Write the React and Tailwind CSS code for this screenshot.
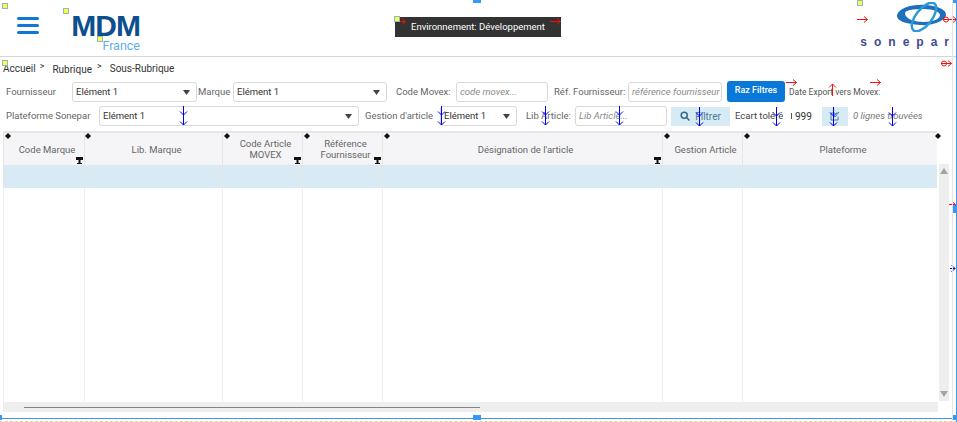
const font = { fontFamily: 'Roboto, sans-serif' };

const columns = [
  { label: 'Code Marque', width: 'w-[81px]', filter: true },
  { label: 'Lib. Marque', width: 'w-[138px]' },
  { label: 'Code Article MOVEX', width: 'w-[80px]', filter: true },
  { label: 'Référence Fournisseur', width: 'w-[80px]', filter: true },
  { label: "Désignation de l'article", width: 'w-[280px]', filter: true },
  { label: 'Gestion Article', width: 'w-[80px]' },
  { label: 'Plateforme', width: 'flex-1' },
];

const blueArrows = [
  { x: 178, y: 106 }, { x: 436, y: 106 }, { x: 540, y: 106 }, { x: 614, y: 106 },
  { x: 694, y: 107 }, { x: 771, y: 107 }, { x: 828, y: 107 }, { x: 887, y: 107 },
];

const redArrows = [
  { x: 400, y: 18, w: 6 }, { x: 550, y: 18, w: 11 }, { x: 857, y: 16, w: 11 },
  { x: 943, y: 16, w: 14, ring: true }, { x: 786, y: 79, w: 11 }, { x: 870, y: 79, w: 11 },
  { x: 949, y: 201, w: 7 }, { x: 941, y: 60, w: 11, ring: true },
];

const yellowMarks = [
  { x: 2, y: 3 }, { x: 63, y: 8 }, { x: 97, y: 36 }, { x: 2, y: 60 }, { x: 394, y: 16 }, { x: 857, y: 0 },
];

const handles = [
  { x: 473, y: 0, w: 8, h: 3 }, { x: 952, y: 0, w: 5, h: 3 }, { x: 952, y: 205, w: 5, h: 8 },
  { x: 0, y: 415, w: 2, h: 5 }, { x: 473, y: 415, w: 8, h: 5 }, { x: 952, y: 415, w: 5, h: 5 },
];

const grips = [5, 85, 224, 304, 384, 664, 744, 935];

function Caret() {
  return (
    <svg width="7" height="5" viewBox="0 0 7 5" className="shrink-0">
      <path d="M0 0h7L3.500 5z" fill="#444" />
    </svg>
  );
}

function Select({ className, value = 'Elément 1' }) {
  return (
    <div className={`flex h-[20px] items-center justify-between rounded-[3px] border border-[#d8d8d8] bg-white pl-[3px] pr-[6px] text-[9.500px] text-[#333] ${className}`}>
      <span>{value}</span>
      <Caret />
    </div>
  );
}

function Field({ className, placeholder }) {
  return (
    <div className={`flex h-[20px] items-center overflow-hidden whitespace-nowrap rounded-[3px] border border-[#d8d8d8] bg-white px-[3px] text-[9.500px] italic text-[#8a8a8a] ${className}`}>
      {placeholder}
    </div>
  );
}

function Label({ children, className = '' }) {
  return <span className={`whitespace-nowrap text-[9.500px] text-[#666] ${className}`}>{children}</span>;
}

function FilterIcon() {
  return (
    <svg width="7" height="7" viewBox="0 0 7 7" className="absolute bottom-[1px] right-[1px]">
      <path d="M0 0h7v3H4.500v3H6v1H1V6h1.500V3H0z" fill="#111" />
    </svg>
  );
}

function Logo() {
  return (
    <svg width="52" height="30" viewBox="0 0 52 30">
      <path
        fillRule="evenodd"
        d="M1 13C3 6 16 2 30 3c12 1 21 5 20 10-1 6-13 11-26 10C10 22 0 19 1 13zM9 12c1 5 9 8 19 8 9 0 16-3 16-7 0-3-7-6-16-6C17 7 8 8 9 12z"
        fill="#1f6fbd"
      />
      <ellipse cx="28" cy="15" rx="17" ry="8" fill="none" stroke="#2a9ad8" strokeWidth="2.500" transform="rotate(-52 28 15)" />
    </svg>
  );
}

function Overlays() {
  return (
    <>
      {yellowMarks.map((m) => (
        <div key={`${m.x}-${m.y}`} className="absolute h-[6px] w-[6px] border border-[#8db4d8] bg-[#ffff33]" style={{ left: m.x, top: m.y }} />
      ))}
      {blueArrows.map((a) => (
        <svg key={a.x} width="10" height="20" viewBox="0 0 10 20" className="absolute" style={{ left: a.x, top: a.y }}>
          <path d="M5.500 0v19M2 5.500 5.500 9 9 5.500M2 15.500 5.500 19 9 15.500" fill="none" stroke="#0000f0" strokeWidth="1" />
        </svg>
      ))}
      {redArrows.map((a) => (
        <svg key={`${a.x}-${a.y}`} width={a.w} height="7" viewBox={`0 0 ${a.w} 7`} className="absolute" style={{ left: a.x, top: a.y }}>
          <path d={`M0 3.500h${a.w - 0.5}M${a.w - 4} .5l3.500 3-3.500 3`} fill="none" stroke="#ee1111" strokeWidth="1" />
          {a.ring && <circle cx="3" cy="3.500" r="2.500" fill="none" stroke="#ee1111" strokeWidth="1" />}
        </svg>
      ))}
      <svg width="9" height="13" viewBox="0 0 9 13" className="absolute left-[828px] top-[83px]">
        <path d="M4.500 13V1M1 4.500 4.500 1 8 4.500" fill="none" stroke="#ee1111" strokeWidth="1" />
      </svg>
      <svg width="6" height="9" viewBox="0 0 6 9" className="absolute left-[950px] top-[264px]">
        <path d="M0 4.500h5M1.500 1 5 4.500 1.500 8" fill="none" stroke="#0000f0" strokeWidth="1" />
      </svg>
      {grips.map((x) => (
        <svg key={x} width="6" height="6" viewBox="0 0 6 6" className="absolute top-[133px]" style={{ left: x }}>
          <path d="M3 0 6 3 3 6 0 3z" fill="#111" />
        </svg>
      ))}
      {handles.map((h) => (
        <div key={`${h.x}-${h.y}`} className="absolute bg-[#3399ff]" style={{ left: h.x, top: h.y, width: h.w, height: h.h }} />
      ))}
      <div className="absolute bottom-[3px] left-0 h-px w-full bg-[#3f97ea]" />
      <div className="absolute bottom-0 left-0 h-px w-full border-b border-dashed border-[#f0c8a0]" />
      <div className="absolute right-0 top-0 h-full w-px bg-[#3f97ea]" />
      <div className="absolute right-[4px] top-0 h-full w-px bg-[#e4e4e4]" />
    </>
  );
}

export default function App() {
  return (
    <div className="relative h-[422px] w-[957px] overflow-hidden bg-white" style={font}>
      <header className="flex h-[57px] items-start border-b border-[#d4d4d4]">
        <div className="ml-[17px] mt-[17px] flex h-[17px] w-[22px] flex-col justify-between">
          <div className="h-[3px] rounded-full bg-[#0d78d6]" />
          <div className="h-[3px] rounded-full bg-[#0d78d6]" />
          <div className="h-[3px] rounded-full bg-[#0d78d6]" />
        </div>
        <div className="ml-[30px] mt-[12px] flex w-[71px] flex-col items-end">
          <span className="text-[30px] font-bold leading-[28px] tracking-[-1px] text-[#0c4f8c]" style={{ fontFamily: '"Liberation Sans", sans-serif' }}>MDM</span>
          <span className="text-[12.500px] leading-[11px] text-[#62ade6]">France</span>
        </div>
        <div className="ml-[255px] mt-[17px] flex h-[20px] w-[166px] items-center justify-center bg-[#333] text-[9.500px] text-white">
          Environnement: Développement
        </div>
        <div className="ml-[301px] mt-[2px] flex w-[87px] flex-col items-end">
          <div className="mr-[1px]"><Logo /></div>
          <span className="mr-[-7px] mt-[4px] text-[12px] font-bold leading-[12px] tracking-[7px] text-[#3d4a96]" style={{ fontFamily: '"Liberation Sans", sans-serif' }}>sonepar</span>
        </div>
      </header>

      <nav className="ml-[3px] mt-[3px] flex h-[16px] items-center text-[10px] text-[#333]">
        <span>Accueil</span>
        <span className="mb-[2px] ml-[4px] text-[9px]">&gt;</span>
        <span className="ml-[8px] mt-[2px]">Rubrique</span>
        <span className="mb-[2px] ml-[5px] text-[9px]">&gt;</span>
        <span className="ml-[8px]">Sous-Rubrique</span>
      </nav>

      <div className="mt-[6px] flex h-[20px] items-center pl-[6px]">
        <Label className="w-[66px]">Fournisseur</Label>
        <Select className="w-[125px]" />
        <Label className="ml-[1px] w-[35px]">Marque</Label>
        <Select className="w-[154px]" />
        <Label className="ml-[9px] w-[60px]">Code Movex:</Label>
        <Field className="w-[92px]" placeholder="code movex..." />
        <Label className="ml-[6px] w-[74px]">Réf. Fournisseur:</Label>
        <Field className="w-[94px]" placeholder="référence fournisseur" />
        <button className="ml-[5px] h-[21px] w-[58px] -translate-y-px rounded-[3px] bg-[#0a78d8] text-[9px] font-medium text-white">Raz Filtres</button>
        <span className="ml-[4px] whitespace-nowrap text-[8.500px] text-[#555]">Date Export vers Movex:</span>
      </div>

      <div className="mt-[4px] flex h-[20px] items-center pl-[6px]">
        <Label className="w-[93px]">Plateforme Sonepar</Label>
        <Select className="w-[260px]" />
        <Label className="ml-[6px] w-[75px]">Gestion d'article</Label>
        <Select className="w-[77px]" />
        <Label className="ml-[9px] w-[49px]">Lib Article:</Label>
        <Field className="w-[92px]" placeholder="Lib Article..." />
        <button className="ml-[4px] flex h-[19px] w-[59px] items-center justify-center gap-[5px] bg-[#d7ebf5] text-[10px] text-[#4a7a95]">
          <svg width="10" height="10" viewBox="0 0 10 10">
            <circle cx="4.200" cy="4.200" r="3" fill="none" stroke="#2f6a8c" strokeWidth="1.500" />
            <path d="M6.500 6.500 9.500 9.500" stroke="#2f6a8c" strokeWidth="1.500" />
          </svg>
          Filtrer
        </button>
        <span className="ml-[5px] w-[56px] whitespace-nowrap text-[9.500px] text-[#444]">Ecart toléré</span>
        <div className="h-[6px] w-px bg-[#555]" />
        <span className="ml-[3px] w-[27px] text-[10px] text-[#333]">999</span>
        <button className="flex h-[19px] w-[26px] items-center justify-center bg-[#d7ebf5]">
          <svg width="10" height="10" viewBox="0 0 10 10">
            <path d="M8 5.500V9H1V2h4M3.500 4.500 5 6l4-5" fill="none" stroke="#4a7a95" strokeWidth="1" />
          </svg>
        </button>
        <span className="ml-[5px] whitespace-nowrap text-[9.500px] italic text-[#777]">0 lignes trouvées</span>
      </div>

      <div className="ml-[3px] mt-[5px] w-[946px]">
        <div className="w-[934px] border-t-2 border-[#e6e6e6]">
          <div className="flex h-[32px] bg-[#f5f5f7]">
            {columns.map((c) => (
              <div key={c.label} className={`relative flex items-center justify-center border-l border-[#e6e6e6] pl-[11px] pr-[5px] text-center text-[9.500px] leading-[11px] text-[#666] ${c.width}`}>
                {c.label}
                {c.filter && <FilterIcon />}
              </div>
            ))}
          </div>
        </div>
        <div className="flex">
          <div className="h-[237px] w-[936px]">
            <div className="flex h-[23px] w-[934px] bg-[#d8ebf5]">
              {columns.map((c) => (
                <div key={c.label} className={`border-l border-[#e6e6e6] ${c.width}`} />
              ))}
            </div>
            <div className="flex h-[214px] w-[934px]">
              {columns.map((c) => (
                <div key={c.label} className={`border-l border-[#eeeeee] ${c.width}`} />
              ))}
            </div>
          </div>
          <div className="-mt-[1px] flex h-[237px] w-[10px] flex-col items-center justify-between bg-[#eeeeee] py-[4px]">
            <svg width="8" height="6" viewBox="0 0 8 6"><path d="M4 0l4 6H0z" fill="#a3a3a3" /></svg>
            <svg width="8" height="6" viewBox="0 0 8 6"><path d="M0 0h8L4 6z" fill="#a3a3a3" /></svg>
          </div>
        </div>
        <div className="flex h-[10px] w-[935px] items-center bg-[#eeeeee] pl-[21px]">
          <div className="h-px w-[456px] bg-[#858585]" />
        </div>
      </div>

      <Overlays />
    </div>
  );
}
